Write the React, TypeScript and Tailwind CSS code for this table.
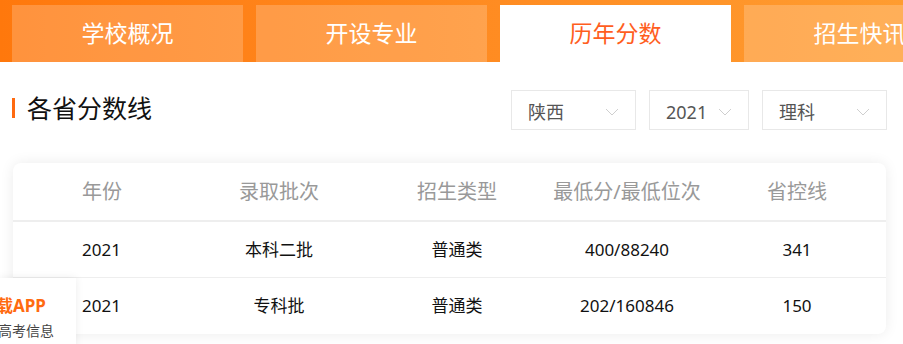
import React from "react";

const tabs = ["学校概况", "开设专业", "历年分数", "招生快讯"];

const rows = [
  { year: "2021", batch: "本科二批", type: "普通类", score: "400/88240", line: "341" },
  { year: "2021", batch: "专科批", type: "普通类", score: "202/160846", line: "150" },
];

function Chevron() {
  return (
    <svg width="14" height="8" viewBox="0 0 14 8" fill="none" className="shrink-0">
      <path d="M1 1l6 6 6-6" stroke="#cfcfcf" strokeWidth="1" />
    </svg>
  );
}

function Select({ label, width }: { label: string; width: string }) {
  return (
    <div className={`flex h-10 items-center justify-between border border-[#e8e8e8] pl-4 pr-4 pt-1 ${width}`}>
      <span className="text-[18px] text-[#555]">{label}</span>
      <Chevron />
    </div>
  );
}

export default function App() {
  return (
    <div
      className="relative h-[344px] w-[903px] overflow-hidden bg-white"
      style={{ fontFamily: '"Noto Sans", "Noto Sans CJK SC", sans-serif' }}
    >
      {/* tab bar */}
      <div className="flex h-[62px] gap-[13px] bg-gradient-to-r from-[#ff780c] via-[#ff8a20] to-[#ff9c30] pl-3 pt-[5px]">
        {tabs.map((t, i) => (
          <div
            key={t}
            className={`flex h-[57px] w-[231px] shrink-0 items-center justify-center text-[23px] ${
              i === 2 ? "bg-white text-[#ff5e1e]" : "bg-white/20 text-white"
            }`}
          >
            {t}
          </div>
        ))}
      </div>

      {/* title + filters */}
      <div className="mt-7 flex items-center justify-between pl-3 pr-4">
        <div className="flex items-center gap-3 pb-1">
          <div className="h-5 w-[3px] bg-[#ff6a10]" />
          <h2 className="text-[25px] leading-[34px] text-[#111]">各省分数线</h2>
        </div>
        <div className="flex gap-[13px]">
          <Select label="陕西" width="w-[125px]" />
          <Select label="2021" width="w-[100px]" />
          <Select label="理科" width="w-[125px]" />
        </div>
      </div>

      {/* table */}
      <div className="ml-[13px] mt-[33px] w-[873px] overflow-hidden rounded-lg bg-white shadow-[0_0_14px_rgba(0,0,0,0.08)]">
        <div className="grid h-[59px] grid-cols-[177px_178px_178px_162px_178px] items-center border-b-[2px] border-[#eeeeee] text-[20px] text-[#999]">
          <div className="pl-[69px]">年份</div>
          <div className="text-center">录取批次</div>
          <div className="text-center">招生类型</div>
          <div className="text-center">最低分/最低位次</div>
          <div className="text-center">省控线</div>
        </div>
        {rows.map((r, i) => (
          <div
            key={i}
            className={`grid h-[56px] grid-cols-[177px_178px_178px_162px_178px] items-center text-[17px] text-[#111] ${
              i === 0 ? "border-b border-[#eeeeee]" : ""
            }`}
          >
            <div className="pl-[69px]">{r.year}</div>
            <div className="text-center">{r.batch}</div>
            <div className="text-center">{r.type}</div>
            <div className="text-center">{r.score}</div>
            <div className="text-center">{r.line}</div>
          </div>
        ))}
      </div>

      {/* floating app widget */}
      <div className="absolute left-0 top-[278px] h-[80px] w-[76px] overflow-hidden bg-white shadow-[0_0_8px_rgba(0,0,0,0.08)]">
        <div className="ml-[-21px] mt-[18px] whitespace-nowrap text-[17px] font-bold leading-5 text-[#ff6a10]">下载APP</div>
        <div className="ml-[-2px] mt-[5px] whitespace-nowrap text-[14px] leading-5 text-[#444]">高考信息</div>
      </div>
    </div>
  );
}
